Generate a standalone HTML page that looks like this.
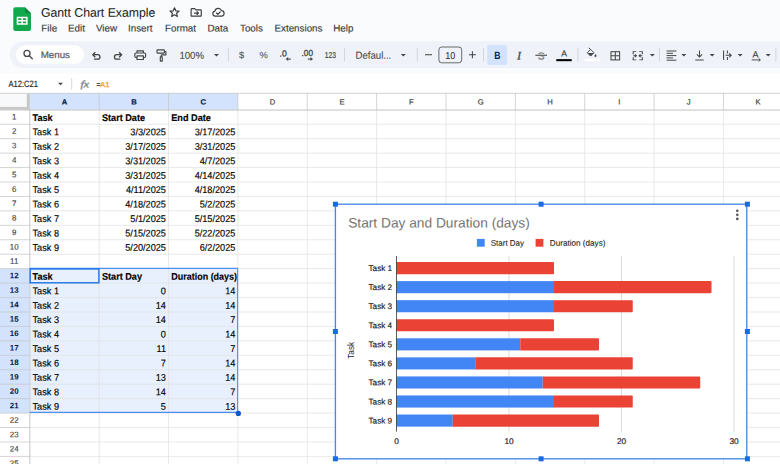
<!DOCTYPE html>
<html lang="en"><head><meta charset="utf-8"><title>Gantt Chart Example - Google Sheets</title>
<style>
html,body{margin:0;padding:0;background:#f9fbfd;overflow:hidden}
body{width:780px;height:464px;position:relative;font-family:"Liberation Sans", sans-serif}
svg{display:block;position:absolute;left:0;top:0}
text{font-family:"Liberation Sans", sans-serif;white-space:pre}
</style></head><body>
<svg width="780" height="464" viewBox="0 0 780 464">
<rect x="0" y="0" width="780" height="464" fill="#f9fbfd"/>
<g transform="translate(13.3,7.2)">
<path d="M2 0 H11.6 L17.7 6.1 V21.8 a2 2 0 0 1 -2 2 H2 a2 2 0 0 1 -2 -2 V2 a2 2 0 0 1 2 -2 Z" fill="#12a84c"/>
<path d="M11.6 0 L17.7 6.1 H13.2 a1.6 1.6 0 0 1 -1.6 -1.6 Z" fill="#0a8a3c"/>
<path d="M3.4 9.6 h10.9 v7.9 h-10.9 Z M4.9 11 v1.8 h3.2 v-1.8 Z M9.6 11 v1.8 h3.2 v-1.8 Z M4.9 14.2 v1.9 h3.2 v-1.9 Z M9.6 14.2 v1.9 h3.2 v-1.9 Z" fill="#fff" fill-rule="evenodd"/>
</g>
<text transform="rotate(0.03 40.90 16.70)" x="40.90" y="16.70" font-size="12.4" fill="#1f1f1f" stroke="#1f1f1f" stroke-width="0.08" textLength="114.5" lengthAdjust="spacingAndGlyphs">Gantt Chart Example</text>
<path transform="translate(174.5,12.6) scale(0.88) translate(-174,-12.6)" d="M174 7.2 l1.5 3.4 3.7 .35 -2.8 2.45 .85 3.6 -3.25 -1.95 -3.25 1.95 .85 -3.6 -2.8 -2.45 3.7 -.35 Z" fill="none" stroke="#3c3f3e" stroke-width="1.35" stroke-linejoin="round"/>
<g transform="translate(196.45,12.45) scale(0.9,0.93) translate(-195.95,-12.45)" fill="none" stroke="#3c3f3e" stroke-width="1.3" stroke-linejoin="round" stroke-linecap="round"><path d="M190.6 8.4 h3.4 l1.3 1.3 h5.4 a.6 .6 0 0 1 .6 .6 v5.6 a.6 .6 0 0 1 -.6 .6 h-10.1 a.6 .6 0 0 1 -.6 -.6 v-6.9 a.6 .6 0 0 1 .6 -.6 Z"/><path d="M193.6 13.1 h4.4 M196.6 11.5 l1.6 1.6 -1.6 1.6"/></g>
<g transform="translate(218.35,12.5) scale(0.86,0.88) translate(-218.3,-12.3)" fill="none" stroke="#3c3f3e" stroke-width="1.35" stroke-linejoin="round" stroke-linecap="round"><path d="M214.6 16.4 a2.9 2.9 0 0 1 -.3 -5.75 a4 4 0 0 1 7.6 -.5 a3.15 3.15 0 0 1 .5 6.25 Z"/><path d="M216.2 12.9 l1.5 1.5 2.7 -2.7"/></g>
<text transform="rotate(0.03 41.30 31.50)" x="41.30" y="31.50" font-size="9.8" fill="#3a3d3c" stroke="#3a3d3c" stroke-width="0.15" >File</text>
<text transform="rotate(0.03 68.00 31.50)" x="68.00" y="31.50" font-size="9.8" fill="#3a3d3c" stroke="#3a3d3c" stroke-width="0.15" >Edit</text>
<text transform="rotate(0.03 96.00 31.50)" x="96.00" y="31.50" font-size="9.8" fill="#3a3d3c" stroke="#3a3d3c" stroke-width="0.15" >View</text>
<text transform="rotate(0.03 128.00 31.50)" x="128.00" y="31.50" font-size="9.8" fill="#3a3d3c" stroke="#3a3d3c" stroke-width="0.15" >Insert</text>
<text transform="rotate(0.03 165.00 31.50)" x="165.00" y="31.50" font-size="9.8" fill="#3a3d3c" stroke="#3a3d3c" stroke-width="0.15" >Format</text>
<text transform="rotate(0.03 207.50 31.50)" x="207.50" y="31.50" font-size="9.8" fill="#3a3d3c" stroke="#3a3d3c" stroke-width="0.15" >Data</text>
<text transform="rotate(0.03 240.00 31.50)" x="240.00" y="31.50" font-size="9.8" fill="#3a3d3c" stroke="#3a3d3c" stroke-width="0.15" >Tools</text>
<text transform="rotate(0.03 274.50 31.50)" x="274.50" y="31.50" font-size="9.8" fill="#3a3d3c" stroke="#3a3d3c" stroke-width="0.15" >Extensions</text>
<text transform="rotate(0.03 333.30 31.50)" x="333.30" y="31.50" font-size="9.8" fill="#3a3d3c" stroke="#3a3d3c" stroke-width="0.15" >Help</text>
<path d="M23.2 41.2 H780 V67.9 H23.2 a13.35 13.35 0 0 1 0 -26.7 Z" fill="#eff3f9"/>
<rect x="15.9" y="45.2" width="68.1" height="18.9" rx="9.45" fill="#fff"/>
<g fill="none" stroke="#444746" stroke-width="1.25" stroke-linecap="round"><circle cx="27" cy="53.4" r="3.05"/><path d="M29.3 55.7 L32.3 58.8"/></g>
<text transform="rotate(0.03 40.70 58.00)" x="40.70" y="58.00" font-size="9.4" fill="#5a5d5c" stroke="#5a5d5c" stroke-width="0.22" textLength="29.3" lengthAdjust="spacingAndGlyphs">Menus</text>
<g fill="none" stroke="#444746" stroke-width="1.3" stroke-linejoin="miter"><path d="M95.3 52.2 l-2.5 2.5 2.5 2.5 M93 54.7 h4.7 a2.25 2.25 0 0 1 0 4.5 h-3.7"/></g>
<g fill="none" stroke="#444746" stroke-width="1.3" stroke-linejoin="miter"><path d="M119.1 52.2 l2.5 2.5 -2.5 2.5 M121.4 54.7 h-4.7 a2.25 2.25 0 0 0 0 4.5 h3.7"/></g>
<g fill="none" stroke="#444746" stroke-width="1.2" stroke-linejoin="round"><path d="M137 53 v-2.1 h6.4 v2.1"/><rect x="134.8" y="53" width="10.8" height="4.5" rx="1.2"/><rect x="137" y="55.9" width="6.4" height="3.6" fill="#eff3f9"/></g>
<g fill="none" stroke="#444746" stroke-width="1.15" stroke-linejoin="round"><rect x="157" y="49.9" width="7.4" height="3.2" rx=".5"/><path d="M164.4 51.5 h1.5 v3.4 h-4.6 v2"/><rect x="160.3" y="56.9" width="2" height="4.2" /></g>
<text transform="rotate(0.03 179.40 58.80)" x="179.40" y="58.80" font-size="10" fill="#444746" stroke="#444746" stroke-width="0.1" textLength="24.6" lengthAdjust="spacingAndGlyphs">100%</text>
<path d="M214.00 54.00 h5 l-2.5 2.5 Z" fill="#444746"/>
<rect x="227.85" y="48.2" width="0.7" height="13.20" fill="#c7c7c7"/>
<text transform="rotate(0.03 241.50 58.30)" x="241.50" y="58.30" font-size="9.4" fill="#444746" stroke="#444746" stroke-width="0.05" text-anchor="middle" >$</text>
<text transform="rotate(0.03 263.60 58.30)" x="263.60" y="58.30" font-size="9.4" fill="#444746" stroke="#444746" stroke-width="0.05" text-anchor="middle" >%</text>
<text transform="rotate(0.03 279.60 56.40)" x="279.60" y="56.40" font-size="8.8" fill="#444746" stroke="#444746" stroke-width="0.3" textLength="7.2" lengthAdjust="spacingAndGlyphs">.0</text>
<path d="M290.8 59.1 h-3.4" fill="none" stroke="#444746" stroke-width="1.1"/><path d="M285.7 59.1 l2.5 -2 v4 Z" fill="#444746"/>
<text transform="rotate(0.03 301.60 56.40)" x="301.60" y="56.40" font-size="8.8" fill="#444746" stroke="#444746" stroke-width="0.3" textLength="11.4" lengthAdjust="spacingAndGlyphs">.00</text>
<path d="M307.8 59.1 h3.4" fill="none" stroke="#444746" stroke-width="1.1"/><path d="M313 59.1 l-2.5 -2 v4 Z" fill="#444746"/>
<text transform="rotate(0.03 324.70 57.80)" x="324.70" y="57.80" font-size="8.5" fill="#444746" stroke="#444746" stroke-width="0.22" textLength="11.2" lengthAdjust="spacingAndGlyphs">123</text>
<rect x="344.25" y="48.2" width="0.7" height="13.20" fill="#c7c7c7"/>
<text transform="rotate(0.03 355.50 58.80)" x="355.50" y="58.80" font-size="10.3" fill="#444746" stroke="#444746" stroke-width="0.1" textLength="35.8" lengthAdjust="spacingAndGlyphs">Defaul...</text>
<path d="M400.80 54.00 h5 l-2.5 2.5 Z" fill="#444746"/>
<rect x="416.85" y="48.2" width="0.7" height="13.20" fill="#c7c7c7"/>
<rect x="425" y="54.2" width="7" height="1.05" fill="#444746"/>
<rect x="438.9" y="47" width="22.8" height="15.8" rx="2.8" fill="none" stroke="#444746" stroke-width="0.8"/>
<text transform="rotate(0.03 450.20 58.70)" x="450.20" y="58.70" font-size="10" fill="#2a2a2a" stroke="#2a2a2a" stroke-width="0.05" text-anchor="middle" textLength="10" lengthAdjust="spacingAndGlyphs">10</text>
<path d="M468.9 54.7 h7 M472.4 51.2 v7" stroke="#444746" stroke-width="1.05" fill="none"/>
<rect x="483.25" y="48.2" width="0.7" height="13.20" fill="#c7c7c7"/>
<rect x="487.2" y="44.7" width="20" height="20.3" rx="2.8" fill="#d3e3fd"/>
<text transform="rotate(0.03 497.30 59.00)" x="497.30" y="59.00" font-size="10.6" fill="#041e49" text-anchor="middle" font-weight="bold" textLength="6.2" lengthAdjust="spacingAndGlyphs">B</text>
<text transform="rotate(0.03 519.20 59.30)" x="519.20" y="59.30" font-size="11.2" fill="#444746" text-anchor="middle" font-style="italic" style="font-family:'Liberation Serif',serif" stroke="#444746" stroke-width="0.35">I</text>
<text transform="rotate(0.03 541.20 59.40)" x="541.20" y="59.40" font-size="10.2" fill="#6b6e6d" stroke="#6b6e6d" stroke-width="0.22" text-anchor="middle" >S</text>
<rect x="535.4" y="54.1" width="11.6" height="2.3" fill="#eff3f9"/><rect x="535.4" y="54.7" width="11.6" height="1.1" fill="#444746"/>
<text transform="rotate(0.03 564.00 56.50)" x="564.00" y="56.50" font-size="8.6" fill="#444746" stroke="#444746" stroke-width="0.22" text-anchor="middle" >A</text>
<rect x="556.3" y="59.1" width="15.4" height="2.1" fill="#000"/>
<rect x="577.65" y="48.2" width="0.7" height="13.20" fill="#c7c7c7"/>
<g transform="translate(591.8,52.3) scale(0.9) translate(-592.6,-52.6)">
<g fill="none" stroke="#444746" stroke-width="1.1" stroke-linejoin="round"><path d="M591.3 49.4 l3.7 3.7 -3.7 3.7 -3.7 -3.7 Z" /><path d="M589.2 47.6 l2.1 1.9"/></g>
<path d="M587.9 53.3 h6.9 l-3.5 3.4 Z" fill="#444746"/>
<path d="M596.7 54.6 c.8 1.1 1.1 1.6 1.1 2.1 a1.1 1.1 0 0 1 -2.2 0 c0 -.5 .3 -1 1.1 -2.1 Z" fill="#444746"/>
</g>
<rect x="584.6" y="59.1" width="15.2" height="2.2" fill="#fff"/>
<g fill="none" stroke="#444746" stroke-width="1.05"><rect x="611" y="51.7" width="8.6" height="8.2"/><path d="M615.3 51.7 v8.2 M611 55.8 h8.6"/></g>
<g transform="translate(637.75,55.75) scale(0.94,0.86) translate(-637.85,-55.2)" fill="none" stroke="#444746" stroke-width="1.15"><path d="M633 53.4 v-3 h3.3 M639.4 50.4 h3.3 v3 M633 57 v3 h3.3 M639.4 60 h3.3 v-3"/><path d="M633 55.2 h3.4 m-1.5 -1.5 l1.5 1.5 -1.5 1.5 M642.7 55.2 h-3.4 m1.5 -1.5 l-1.5 1.5 1.5 1.5"/></g>
<path d="M649.80 54.00 h5 l-2.5 2.5 Z" fill="#444746"/>
<rect x="659.25" y="48.2" width="0.7" height="13.20" fill="#c7c7c7"/>
<path d="M666.6 51 h9.8 M666.6 53.3 h6.4 M666.6 55.6 h9.8 M666.6 57.9 h6.4 M666.6 60.2 h9.8" stroke="#444746" stroke-width="1" fill="none"/>
<path d="M681.30 54.00 h5 l-2.5 2.5 Z" fill="#444746"/>
<path d="M699.5 50.4 v6.4 m-2.6 -2.4 l2.6 2.6 2.6 -2.6 M695.3 60 h8.4" stroke="#444746" stroke-width="1.05" fill="none"/>
<path d="M709.60 54.00 h5 l-2.5 2.5 Z" fill="#444746"/>
<path d="M723.6 50.6 v9.4 M727.4 50.6 v3 M727.4 57 v3 M725.6 55.3 h5.6 m-2 -2 l2 2 -2 2" stroke="#444746" stroke-width="1.05" fill="none"/>
<path d="M737.70 54.00 h5 l-2.5 2.5 Z" fill="#444746"/>
<text transform="rotate(0.03 755.60 57.40)" x="755.60" y="57.40" font-size="9" fill="#444746" stroke="#444746" stroke-width="0.22" text-anchor="middle" >A</text>
<path d="M751.7 59.9 h8.6 m-1.6 -1.5 l1.6 1.5 -1.6 1.5" stroke="#444746" stroke-width="0.95" fill="none"/>
<path d="M765.70 54.00 h5 l-2.5 2.5 Z" fill="#444746"/>
<rect x="775.55" y="48.2" width="0.7" height="13.20" fill="#c7c7c7"/>
<rect x="0" y="73.8" width="780" height="390.2" fill="#fff"/>
<text transform="rotate(0.03 8.40 86.60)" x="8.40" y="86.60" font-size="9.1" fill="#1f1f1f" stroke="#1f1f1f" stroke-width="0.15" textLength="29.6" lengthAdjust="spacingAndGlyphs">A12:C21</text>
<path d="M58.00 82.70 h5 l-2.5 2.5 Z" fill="#444746"/>
<rect x="71.45" y="78.3" width="0.7" height="11.30" fill="#c7c7c7"/>
<text transform="rotate(0.03 80.40 87.20)" x="80.40" y="87.20" font-size="9.6" fill="#7c8286" stroke="#7c8286" stroke-width="0.3" font-style="italic" style="font-family:'Liberation Serif',serif" textLength="8.6" lengthAdjust="spacingAndGlyphs">fx</text>
<text x="96.5" y="87" font-size="6.4" stroke-width="0.25" fill="#1f1f1f" stroke="#1f1f1f">=</text><text x="100" y="86.6" font-size="7.8" stroke-width="0.25" fill="#f7981d" stroke="#f7981d">A1</text>
<rect x="0" y="93.3" width="780" height="16.80" fill="#fff"/>
<rect x="0" y="93.3" width="27.4" height="16.80" fill="#f8f9fa"/>
<rect x="29.84" y="93.3" width="208.08" height="16.80" fill="#d3e3fd"/>
<rect x="0" y="268.66" width="29.84" height="144.42" fill="#d3e3fd"/>
<rect x="29.84" y="268.66" width="208.08" height="144.42" fill="#e8f0fd"/>
<path d="M29.84 109.8 V464 M99.20 109.8 V464 M168.56 109.8 V464 M237.92 109.8 V464 M307.28 109.8 V464 M376.64 109.8 V464 M446.00 109.8 V464 M515.36 109.8 V464 M584.72 109.8 V464 M654.08 109.8 V464 M723.44 109.8 V464 M792.80 109.8 V464 M29.84 109.80 H780 M29.84 124.24 H780 M29.84 138.68 H780 M29.84 153.13 H780 M29.84 167.57 H780 M29.84 182.01 H780 M29.84 196.45 H780 M29.84 210.89 H780 M29.84 225.34 H780 M29.84 239.78 H780 M29.84 254.22 H780 M29.84 268.66 H780 M29.84 283.10 H780 M29.84 297.55 H780 M29.84 311.99 H780 M29.84 326.43 H780 M29.84 340.87 H780 M29.84 355.31 H780 M29.84 369.76 H780 M29.84 384.20 H780 M29.84 398.64 H780 M29.84 413.08 H780 M29.84 427.52 H780 M29.84 441.97 H780 M29.84 456.41 H780 M29.84 470.85 H780 " stroke="#e1e1e1" stroke-width="0.75" fill="none"/>
<path d="M99.20 93.3 V110.1 M168.56 93.3 V110.1 M237.92 93.3 V110.1 M307.28 93.3 V110.1 M376.64 93.3 V110.1 M446.00 93.3 V110.1 M515.36 93.3 V110.1 M584.72 93.3 V110.1 M654.08 93.3 V110.1 M723.44 93.3 V110.1 M792.80 93.3 V110.1 M0 124.24 H29.84 M0 138.68 H29.84 M0 153.13 H29.84 M0 167.57 H29.84 M0 182.01 H29.84 M0 196.45 H29.84 M0 210.89 H29.84 M0 225.34 H29.84 M0 239.78 H29.84 M0 254.22 H29.84 M0 268.66 H29.84 M0 283.10 H29.84 M0 297.55 H29.84 M0 311.99 H29.84 M0 326.43 H29.84 M0 340.87 H29.84 M0 355.31 H29.84 M0 369.76 H29.84 M0 384.20 H29.84 M0 398.64 H29.84 M0 413.08 H29.84 M0 427.52 H29.84 M0 441.97 H29.84 M0 456.41 H29.84 M0 470.85 H29.84 " stroke="#c4c7c5" stroke-width="0.75" fill="none"/>
<path d="M0 93.3 H780 M0 110.1 H780 M29.84 110.1 V464" stroke="#c4c7c5" stroke-width="0.8" fill="none"/>
<rect x="26.8" y="93.6" width="3" height="16.80" fill="#c6c6c6"/>
<rect x="0" y="106.90" width="29.8" height="3.1" fill="#c9c9c9"/>
<text transform="rotate(0.03 64.52 104.40)" x="64.52" y="104.40" font-size="7.6" fill="#041e49" stroke="#041e49" stroke-width="0.22" text-anchor="middle" font-weight="bold" >A</text>
<text transform="rotate(0.03 133.88 104.40)" x="133.88" y="104.40" font-size="7.6" fill="#041e49" stroke="#041e49" stroke-width="0.22" text-anchor="middle" font-weight="bold" >B</text>
<text transform="rotate(0.03 203.24 104.40)" x="203.24" y="104.40" font-size="7.6" fill="#041e49" stroke="#041e49" stroke-width="0.22" text-anchor="middle" font-weight="bold" >C</text>
<text transform="rotate(0.03 272.60 104.40)" x="272.60" y="104.40" font-size="7.6" fill="#444746" stroke="#444746" stroke-width="0.22" text-anchor="middle" >D</text>
<text transform="rotate(0.03 341.96 104.40)" x="341.96" y="104.40" font-size="7.6" fill="#444746" stroke="#444746" stroke-width="0.22" text-anchor="middle" >E</text>
<text transform="rotate(0.03 411.32 104.40)" x="411.32" y="104.40" font-size="7.6" fill="#444746" stroke="#444746" stroke-width="0.22" text-anchor="middle" >F</text>
<text transform="rotate(0.03 480.68 104.40)" x="480.68" y="104.40" font-size="7.6" fill="#444746" stroke="#444746" stroke-width="0.22" text-anchor="middle" >G</text>
<text transform="rotate(0.03 550.04 104.40)" x="550.04" y="104.40" font-size="7.6" fill="#444746" stroke="#444746" stroke-width="0.22" text-anchor="middle" >H</text>
<text transform="rotate(0.03 619.40 104.40)" x="619.40" y="104.40" font-size="7.6" fill="#444746" stroke="#444746" stroke-width="0.22" text-anchor="middle" >I</text>
<text transform="rotate(0.03 688.76 104.40)" x="688.76" y="104.40" font-size="7.6" fill="#444746" stroke="#444746" stroke-width="0.22" text-anchor="middle" >J</text>
<text transform="rotate(0.03 758.12 104.40)" x="758.12" y="104.40" font-size="7.6" fill="#444746" stroke="#444746" stroke-width="0.22" text-anchor="middle" >K</text>
<text transform="rotate(0.03 14.20 119.44)" x="14.20" y="119.44" font-size="7.9" fill="#3c4043" stroke="#3c4043" stroke-width="0.12" text-anchor="middle" >1</text>
<text transform="rotate(0.03 14.20 133.88)" x="14.20" y="133.88" font-size="7.9" fill="#3c4043" stroke="#3c4043" stroke-width="0.12" text-anchor="middle" >2</text>
<text transform="rotate(0.03 14.20 148.33)" x="14.20" y="148.33" font-size="7.9" fill="#3c4043" stroke="#3c4043" stroke-width="0.12" text-anchor="middle" >3</text>
<text transform="rotate(0.03 14.20 162.77)" x="14.20" y="162.77" font-size="7.9" fill="#3c4043" stroke="#3c4043" stroke-width="0.12" text-anchor="middle" >4</text>
<text transform="rotate(0.03 14.20 177.21)" x="14.20" y="177.21" font-size="7.9" fill="#3c4043" stroke="#3c4043" stroke-width="0.12" text-anchor="middle" >5</text>
<text transform="rotate(0.03 14.20 191.65)" x="14.20" y="191.65" font-size="7.9" fill="#3c4043" stroke="#3c4043" stroke-width="0.12" text-anchor="middle" >6</text>
<text transform="rotate(0.03 14.20 206.09)" x="14.20" y="206.09" font-size="7.9" fill="#3c4043" stroke="#3c4043" stroke-width="0.12" text-anchor="middle" >7</text>
<text transform="rotate(0.03 14.20 220.54)" x="14.20" y="220.54" font-size="7.9" fill="#3c4043" stroke="#3c4043" stroke-width="0.12" text-anchor="middle" >8</text>
<text transform="rotate(0.03 14.20 234.98)" x="14.20" y="234.98" font-size="7.9" fill="#3c4043" stroke="#3c4043" stroke-width="0.12" text-anchor="middle" >9</text>
<text transform="rotate(0.03 14.20 249.42)" x="14.20" y="249.42" font-size="7.9" fill="#3c4043" stroke="#3c4043" stroke-width="0.12" text-anchor="middle" >10</text>
<text transform="rotate(0.03 14.20 263.86)" x="14.20" y="263.86" font-size="7.9" fill="#3c4043" stroke="#3c4043" stroke-width="0.12" text-anchor="middle" >11</text>
<text transform="rotate(0.03 14.20 278.30)" x="14.20" y="278.30" font-size="7.9" fill="#041e49" stroke="#041e49" stroke-width="0.05" text-anchor="middle" font-weight="bold" >12</text>
<text transform="rotate(0.03 14.20 292.75)" x="14.20" y="292.75" font-size="7.9" fill="#041e49" stroke="#041e49" stroke-width="0.05" text-anchor="middle" font-weight="bold" >13</text>
<text transform="rotate(0.03 14.20 307.19)" x="14.20" y="307.19" font-size="7.9" fill="#041e49" stroke="#041e49" stroke-width="0.05" text-anchor="middle" font-weight="bold" >14</text>
<text transform="rotate(0.03 14.20 321.63)" x="14.20" y="321.63" font-size="7.9" fill="#041e49" stroke="#041e49" stroke-width="0.05" text-anchor="middle" font-weight="bold" >15</text>
<text transform="rotate(0.03 14.20 336.07)" x="14.20" y="336.07" font-size="7.9" fill="#041e49" stroke="#041e49" stroke-width="0.05" text-anchor="middle" font-weight="bold" >16</text>
<text transform="rotate(0.03 14.20 350.51)" x="14.20" y="350.51" font-size="7.9" fill="#041e49" stroke="#041e49" stroke-width="0.05" text-anchor="middle" font-weight="bold" >17</text>
<text transform="rotate(0.03 14.20 364.96)" x="14.20" y="364.96" font-size="7.9" fill="#041e49" stroke="#041e49" stroke-width="0.05" text-anchor="middle" font-weight="bold" >18</text>
<text transform="rotate(0.03 14.20 379.40)" x="14.20" y="379.40" font-size="7.9" fill="#041e49" stroke="#041e49" stroke-width="0.05" text-anchor="middle" font-weight="bold" >19</text>
<text transform="rotate(0.03 14.20 393.84)" x="14.20" y="393.84" font-size="7.9" fill="#041e49" stroke="#041e49" stroke-width="0.05" text-anchor="middle" font-weight="bold" >20</text>
<text transform="rotate(0.03 14.20 408.28)" x="14.20" y="408.28" font-size="7.9" fill="#041e49" stroke="#041e49" stroke-width="0.05" text-anchor="middle" font-weight="bold" >21</text>
<text transform="rotate(0.03 14.20 422.72)" x="14.20" y="422.72" font-size="7.9" fill="#3c4043" stroke="#3c4043" stroke-width="0.12" text-anchor="middle" >22</text>
<text transform="rotate(0.03 14.20 437.17)" x="14.20" y="437.17" font-size="7.9" fill="#3c4043" stroke="#3c4043" stroke-width="0.12" text-anchor="middle" >23</text>
<text transform="rotate(0.03 14.20 451.61)" x="14.20" y="451.61" font-size="7.9" fill="#3c4043" stroke="#3c4043" stroke-width="0.12" text-anchor="middle" >24</text>
<text transform="rotate(0.03 14.20 466.05)" x="14.20" y="466.05" font-size="7.9" fill="#3c4043" stroke="#3c4043" stroke-width="0.12" text-anchor="middle" >25</text>
<text transform="translate(32.54,120.89) rotate(0.03) scale(0.94,1)" font-size="9.734" fill="#000" stroke="#000" stroke-width="0.15" font-weight="bold" >Task</text>
<text transform="translate(101.90,120.89) rotate(0.03) scale(0.94,1)" font-size="9.734" fill="#000" stroke="#000" stroke-width="0.15" font-weight="bold" >Start Date</text>
<text transform="translate(171.26,120.89) rotate(0.03) scale(0.94,1)" font-size="9.734" fill="#000" stroke="#000" stroke-width="0.15" font-weight="bold" >End Date</text>
<text transform="translate(32.54,135.33) rotate(0.03) scale(0.94,1)" font-size="9.734" fill="#000" stroke="#000" stroke-width="0.15" >Task 1</text>
<text transform="translate(165.96,135.33) rotate(0.03) scale(0.94,1)" font-size="9.734" fill="#000" stroke="#000" stroke-width="0.15" text-anchor="end" >3/3/2025</text>
<text transform="translate(235.32,135.33) rotate(0.03) scale(0.94,1)" font-size="9.734" fill="#000" stroke="#000" stroke-width="0.15" text-anchor="end" >3/17/2025</text>
<text transform="translate(32.54,149.78) rotate(0.03) scale(0.94,1)" font-size="9.734" fill="#000" stroke="#000" stroke-width="0.15" >Task 2</text>
<text transform="translate(165.96,149.78) rotate(0.03) scale(0.94,1)" font-size="9.734" fill="#000" stroke="#000" stroke-width="0.15" text-anchor="end" >3/17/2025</text>
<text transform="translate(235.32,149.78) rotate(0.03) scale(0.94,1)" font-size="9.734" fill="#000" stroke="#000" stroke-width="0.15" text-anchor="end" >3/31/2025</text>
<text transform="translate(32.54,164.22) rotate(0.03) scale(0.94,1)" font-size="9.734" fill="#000" stroke="#000" stroke-width="0.15" >Task 3</text>
<text transform="translate(165.96,164.22) rotate(0.03) scale(0.94,1)" font-size="9.734" fill="#000" stroke="#000" stroke-width="0.15" text-anchor="end" >3/31/2025</text>
<text transform="translate(235.32,164.22) rotate(0.03) scale(0.94,1)" font-size="9.734" fill="#000" stroke="#000" stroke-width="0.15" text-anchor="end" >4/7/2025</text>
<text transform="translate(32.54,178.66) rotate(0.03) scale(0.94,1)" font-size="9.734" fill="#000" stroke="#000" stroke-width="0.15" >Task 4</text>
<text transform="translate(165.96,178.66) rotate(0.03) scale(0.94,1)" font-size="9.734" fill="#000" stroke="#000" stroke-width="0.15" text-anchor="end" >3/31/2025</text>
<text transform="translate(235.32,178.66) rotate(0.03) scale(0.94,1)" font-size="9.734" fill="#000" stroke="#000" stroke-width="0.15" text-anchor="end" >4/14/2025</text>
<text transform="translate(32.54,193.10) rotate(0.03) scale(0.94,1)" font-size="9.734" fill="#000" stroke="#000" stroke-width="0.15" >Task 5</text>
<text transform="translate(165.96,193.10) rotate(0.03) scale(0.94,1)" font-size="9.734" fill="#000" stroke="#000" stroke-width="0.15" text-anchor="end" >4/11/2025</text>
<text transform="translate(235.32,193.10) rotate(0.03) scale(0.94,1)" font-size="9.734" fill="#000" stroke="#000" stroke-width="0.15" text-anchor="end" >4/18/2025</text>
<text transform="translate(32.54,207.54) rotate(0.03) scale(0.94,1)" font-size="9.734" fill="#000" stroke="#000" stroke-width="0.15" >Task 6</text>
<text transform="translate(165.96,207.54) rotate(0.03) scale(0.94,1)" font-size="9.734" fill="#000" stroke="#000" stroke-width="0.15" text-anchor="end" >4/18/2025</text>
<text transform="translate(235.32,207.54) rotate(0.03) scale(0.94,1)" font-size="9.734" fill="#000" stroke="#000" stroke-width="0.15" text-anchor="end" >5/2/2025</text>
<text transform="translate(32.54,221.99) rotate(0.03) scale(0.94,1)" font-size="9.734" fill="#000" stroke="#000" stroke-width="0.15" >Task 7</text>
<text transform="translate(165.96,221.99) rotate(0.03) scale(0.94,1)" font-size="9.734" fill="#000" stroke="#000" stroke-width="0.15" text-anchor="end" >5/1/2025</text>
<text transform="translate(235.32,221.99) rotate(0.03) scale(0.94,1)" font-size="9.734" fill="#000" stroke="#000" stroke-width="0.15" text-anchor="end" >5/15/2025</text>
<text transform="translate(32.54,236.43) rotate(0.03) scale(0.94,1)" font-size="9.734" fill="#000" stroke="#000" stroke-width="0.15" >Task 8</text>
<text transform="translate(165.96,236.43) rotate(0.03) scale(0.94,1)" font-size="9.734" fill="#000" stroke="#000" stroke-width="0.15" text-anchor="end" >5/15/2025</text>
<text transform="translate(235.32,236.43) rotate(0.03) scale(0.94,1)" font-size="9.734" fill="#000" stroke="#000" stroke-width="0.15" text-anchor="end" >5/22/2025</text>
<text transform="translate(32.54,250.87) rotate(0.03) scale(0.94,1)" font-size="9.734" fill="#000" stroke="#000" stroke-width="0.15" >Task 9</text>
<text transform="translate(165.96,250.87) rotate(0.03) scale(0.94,1)" font-size="9.734" fill="#000" stroke="#000" stroke-width="0.15" text-anchor="end" >5/20/2025</text>
<text transform="translate(235.32,250.87) rotate(0.03) scale(0.94,1)" font-size="9.734" fill="#000" stroke="#000" stroke-width="0.15" text-anchor="end" >6/2/2025</text>
<text transform="translate(32.54,279.75) rotate(0.03) scale(0.94,1)" font-size="9.734" fill="#000" stroke="#000" stroke-width="0.15" font-weight="bold" >Task</text>
<text transform="translate(101.90,279.75) rotate(0.03) scale(0.94,1)" font-size="9.734" fill="#000" stroke="#000" stroke-width="0.15" font-weight="bold" >Start Day</text>
<text transform="translate(171.26,279.75) rotate(0.03) scale(0.94,1)" font-size="9.734" fill="#000" stroke="#000" stroke-width="0.15" font-weight="bold" textLength="70.00" lengthAdjust="spacingAndGlyphs">Duration (days)</text>
<text transform="translate(32.54,294.20) rotate(0.03) scale(0.94,1)" font-size="9.734" fill="#000" stroke="#000" stroke-width="0.15" >Task 1</text>
<text transform="translate(165.96,294.20) rotate(0.03) scale(0.94,1)" font-size="9.734" fill="#000" stroke="#000" stroke-width="0.15" text-anchor="end" >0</text>
<text transform="translate(235.32,294.20) rotate(0.03) scale(0.94,1)" font-size="9.734" fill="#000" stroke="#000" stroke-width="0.15" text-anchor="end" >14</text>
<text transform="translate(32.54,308.64) rotate(0.03) scale(0.94,1)" font-size="9.734" fill="#000" stroke="#000" stroke-width="0.15" >Task 2</text>
<text transform="translate(165.96,308.64) rotate(0.03) scale(0.94,1)" font-size="9.734" fill="#000" stroke="#000" stroke-width="0.15" text-anchor="end" >14</text>
<text transform="translate(235.32,308.64) rotate(0.03) scale(0.94,1)" font-size="9.734" fill="#000" stroke="#000" stroke-width="0.15" text-anchor="end" >14</text>
<text transform="translate(32.54,323.08) rotate(0.03) scale(0.94,1)" font-size="9.734" fill="#000" stroke="#000" stroke-width="0.15" >Task 3</text>
<text transform="translate(165.96,323.08) rotate(0.03) scale(0.94,1)" font-size="9.734" fill="#000" stroke="#000" stroke-width="0.15" text-anchor="end" >14</text>
<text transform="translate(235.32,323.08) rotate(0.03) scale(0.94,1)" font-size="9.734" fill="#000" stroke="#000" stroke-width="0.15" text-anchor="end" >7</text>
<text transform="translate(32.54,337.52) rotate(0.03) scale(0.94,1)" font-size="9.734" fill="#000" stroke="#000" stroke-width="0.15" >Task 4</text>
<text transform="translate(165.96,337.52) rotate(0.03) scale(0.94,1)" font-size="9.734" fill="#000" stroke="#000" stroke-width="0.15" text-anchor="end" >0</text>
<text transform="translate(235.32,337.52) rotate(0.03) scale(0.94,1)" font-size="9.734" fill="#000" stroke="#000" stroke-width="0.15" text-anchor="end" >14</text>
<text transform="translate(32.54,351.96) rotate(0.03) scale(0.94,1)" font-size="9.734" fill="#000" stroke="#000" stroke-width="0.15" >Task 5</text>
<text transform="translate(165.96,351.96) rotate(0.03) scale(0.94,1)" font-size="9.734" fill="#000" stroke="#000" stroke-width="0.15" text-anchor="end" >11</text>
<text transform="translate(235.32,351.96) rotate(0.03) scale(0.94,1)" font-size="9.734" fill="#000" stroke="#000" stroke-width="0.15" text-anchor="end" >7</text>
<text transform="translate(32.54,366.41) rotate(0.03) scale(0.94,1)" font-size="9.734" fill="#000" stroke="#000" stroke-width="0.15" >Task 6</text>
<text transform="translate(165.96,366.41) rotate(0.03) scale(0.94,1)" font-size="9.734" fill="#000" stroke="#000" stroke-width="0.15" text-anchor="end" >7</text>
<text transform="translate(235.32,366.41) rotate(0.03) scale(0.94,1)" font-size="9.734" fill="#000" stroke="#000" stroke-width="0.15" text-anchor="end" >14</text>
<text transform="translate(32.54,380.85) rotate(0.03) scale(0.94,1)" font-size="9.734" fill="#000" stroke="#000" stroke-width="0.15" >Task 7</text>
<text transform="translate(165.96,380.85) rotate(0.03) scale(0.94,1)" font-size="9.734" fill="#000" stroke="#000" stroke-width="0.15" text-anchor="end" >13</text>
<text transform="translate(235.32,380.85) rotate(0.03) scale(0.94,1)" font-size="9.734" fill="#000" stroke="#000" stroke-width="0.15" text-anchor="end" >14</text>
<text transform="translate(32.54,395.29) rotate(0.03) scale(0.94,1)" font-size="9.734" fill="#000" stroke="#000" stroke-width="0.15" >Task 8</text>
<text transform="translate(165.96,395.29) rotate(0.03) scale(0.94,1)" font-size="9.734" fill="#000" stroke="#000" stroke-width="0.15" text-anchor="end" >14</text>
<text transform="translate(235.32,395.29) rotate(0.03) scale(0.94,1)" font-size="9.734" fill="#000" stroke="#000" stroke-width="0.15" text-anchor="end" >7</text>
<text transform="translate(32.54,409.73) rotate(0.03) scale(0.94,1)" font-size="9.734" fill="#000" stroke="#000" stroke-width="0.15" >Task 9</text>
<text transform="translate(165.96,409.73) rotate(0.03) scale(0.94,1)" font-size="9.734" fill="#000" stroke="#000" stroke-width="0.15" text-anchor="end" >5</text>
<text transform="translate(235.32,409.73) rotate(0.03) scale(0.94,1)" font-size="9.734" fill="#000" stroke="#000" stroke-width="0.15" text-anchor="end" >13</text>
<path d="M29.84 268.36 H237.62 V412.38 H29.84" fill="none" stroke="#4d8eee" stroke-width="1.1"/>
<rect x="30.14" y="268.96" width="68.76" height="13.84" fill="none" stroke="#1a73e8" stroke-width="1.4"/>
<circle cx="238.32" cy="413.38" r="2.65" fill="#0b57d0"/>
<rect x="335.4" y="204.2" width="411.40" height="254.60" fill="#fff" stroke="#4a88e4" stroke-width="1.35"/>
<text transform="rotate(0.03 348.20 227.50)" x="348.20" y="227.50" font-size="13.7" fill="#757575" textLength="181.6" lengthAdjust="spacingAndGlyphs">Start Day and Duration (days)</text>
<circle cx="737.3" cy="210.8" r="1.3" fill="#555"/>
<circle cx="737.3" cy="214.85" r="1.3" fill="#555"/>
<circle cx="737.3" cy="218.9" r="1.3" fill="#555"/>
<rect x="476.9" y="238.9" width="7.8" height="7.8" fill="#4285f4"/>
<text transform="rotate(0.03 490.80 245.80)" x="490.80" y="245.80" font-size="8.2" fill="#222" stroke="#222" stroke-width="0.1" textLength="33.2" lengthAdjust="spacingAndGlyphs">Start Day</text>
<rect x="535.6" y="238.9" width="7.8" height="7.8" fill="#ea4335"/>
<text transform="rotate(0.03 549.80 245.80)" x="549.80" y="245.80" font-size="8.2" fill="#222" stroke="#222" stroke-width="0.1" textLength="55.7" lengthAdjust="spacingAndGlyphs">Duration (days)</text>
<rect x="508.65" y="256" width="0.7" height="175.6" fill="#ccc"/>
<rect x="621.15" y="256" width="0.7" height="175.6" fill="#ccc"/>
<rect x="733.65" y="256" width="0.7" height="175.6" fill="#ccc"/>
<path d="M396.50 262.05 h156.50 a1 1 0 0 1 1 1 v10.1 a1 1 0 0 1 -1 1 h-156.50 Z" fill="#ea4335"/>
<text transform="rotate(0.03 392.20 271.00)" x="392.20" y="271.00" font-size="8.2" fill="#222" stroke="#222" stroke-width="0.16" text-anchor="end" >Task 1</text>
<rect x="396.50" y="281.11" width="157.50" height="12.1" fill="#4285f4"/>
<path d="M554.00 281.11 h156.50 a1 1 0 0 1 1 1 v10.1 a1 1 0 0 1 -1 1 h-156.50 Z" fill="#ea4335"/>
<text transform="rotate(0.03 392.20 290.06)" x="392.20" y="290.06" font-size="8.2" fill="#222" stroke="#222" stroke-width="0.16" text-anchor="end" >Task 2</text>
<rect x="396.50" y="300.17" width="157.50" height="12.1" fill="#4285f4"/>
<path d="M554.00 300.17 h77.75 a1 1 0 0 1 1 1 v10.1 a1 1 0 0 1 -1 1 h-77.75 Z" fill="#ea4335"/>
<text transform="rotate(0.03 392.20 309.12)" x="392.20" y="309.12" font-size="8.2" fill="#222" stroke="#222" stroke-width="0.16" text-anchor="end" >Task 3</text>
<path d="M396.50 319.23 h156.50 a1 1 0 0 1 1 1 v10.1 a1 1 0 0 1 -1 1 h-156.50 Z" fill="#ea4335"/>
<text transform="rotate(0.03 392.20 328.18)" x="392.20" y="328.18" font-size="8.2" fill="#222" stroke="#222" stroke-width="0.16" text-anchor="end" >Task 4</text>
<rect x="396.50" y="338.29" width="123.75" height="12.1" fill="#4285f4"/>
<path d="M520.25 338.29 h77.75 a1 1 0 0 1 1 1 v10.1 a1 1 0 0 1 -1 1 h-77.75 Z" fill="#ea4335"/>
<text transform="rotate(0.03 392.20 347.24)" x="392.20" y="347.24" font-size="8.2" fill="#222" stroke="#222" stroke-width="0.16" text-anchor="end" >Task 5</text>
<rect x="396.50" y="357.35" width="78.75" height="12.1" fill="#4285f4"/>
<path d="M475.25 357.35 h156.50 a1 1 0 0 1 1 1 v10.1 a1 1 0 0 1 -1 1 h-156.50 Z" fill="#ea4335"/>
<text transform="rotate(0.03 392.20 366.30)" x="392.20" y="366.30" font-size="8.2" fill="#222" stroke="#222" stroke-width="0.16" text-anchor="end" >Task 6</text>
<rect x="396.50" y="376.41" width="146.25" height="12.1" fill="#4285f4"/>
<path d="M542.75 376.41 h156.50 a1 1 0 0 1 1 1 v10.1 a1 1 0 0 1 -1 1 h-156.50 Z" fill="#ea4335"/>
<text transform="rotate(0.03 392.20 385.36)" x="392.20" y="385.36" font-size="8.2" fill="#222" stroke="#222" stroke-width="0.16" text-anchor="end" >Task 7</text>
<rect x="396.50" y="395.47" width="157.50" height="12.1" fill="#4285f4"/>
<path d="M554.00 395.47 h77.75 a1 1 0 0 1 1 1 v10.1 a1 1 0 0 1 -1 1 h-77.75 Z" fill="#ea4335"/>
<text transform="rotate(0.03 392.20 404.42)" x="392.20" y="404.42" font-size="8.2" fill="#222" stroke="#222" stroke-width="0.16" text-anchor="end" >Task 8</text>
<rect x="396.50" y="414.53" width="56.25" height="12.1" fill="#4285f4"/>
<path d="M452.75 414.53 h145.25 a1 1 0 0 1 1 1 v10.1 a1 1 0 0 1 -1 1 h-145.25 Z" fill="#ea4335"/>
<text transform="rotate(0.03 392.20 423.48)" x="392.20" y="423.48" font-size="8.2" fill="#222" stroke="#222" stroke-width="0.16" text-anchor="end" >Task 9</text>
<rect x="396.10" y="256" width="0.8" height="175.6" fill="#333"/>
<text transform="rotate(0.03 396.50 444.10)" x="396.50" y="444.10" font-size="8.3" fill="#222" stroke="#222" stroke-width="0.18" text-anchor="middle" >0</text>
<text transform="rotate(0.03 509.00 444.10)" x="509.00" y="444.10" font-size="8.3" fill="#222" stroke="#222" stroke-width="0.18" text-anchor="middle" >10</text>
<text transform="rotate(0.03 621.50 444.10)" x="621.50" y="444.10" font-size="8.3" fill="#222" stroke="#222" stroke-width="0.18" text-anchor="middle" >20</text>
<text transform="rotate(0.03 734.00 444.10)" x="734.00" y="444.10" font-size="8.3" fill="#222" stroke="#222" stroke-width="0.18" text-anchor="middle" >30</text>
<text transform="translate(354.3,350.3) rotate(-90)" font-size="8.2" fill="#222" text-anchor="middle" font-style="normal">Task</text>
<rect x="332.90" y="201.70" width="5" height="5" fill="#1a6ae6"/>
<rect x="332.90" y="329.00" width="5" height="5" fill="#1a6ae6"/>
<rect x="332.90" y="456.30" width="5" height="5" fill="#1a6ae6"/>
<rect x="538.60" y="201.70" width="5" height="5" fill="#1a6ae6"/>
<rect x="538.60" y="456.30" width="5" height="5" fill="#1a6ae6"/>
<rect x="744.90" y="201.70" width="5" height="5" fill="#1a6ae6"/>
<rect x="744.90" y="329.00" width="5" height="5" fill="#1a6ae6"/>
<rect x="744.90" y="456.30" width="5" height="5" fill="#1a6ae6"/>
</svg></body></html>
